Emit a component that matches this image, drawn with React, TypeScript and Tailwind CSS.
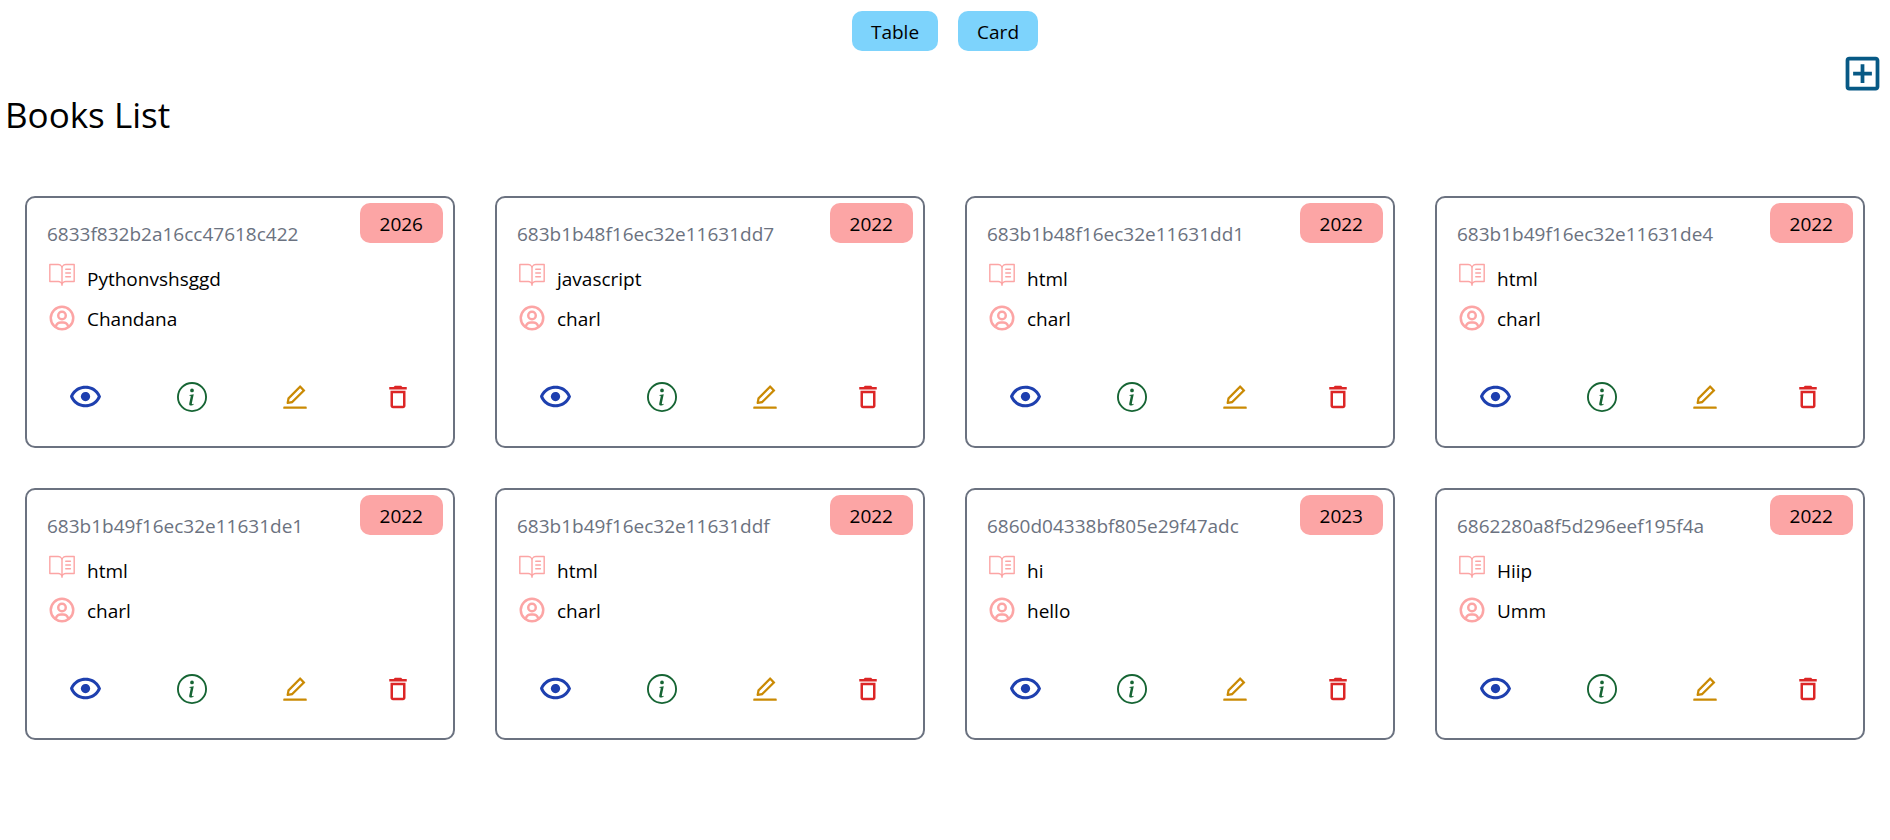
import React from "react";
import { AiOutlineEdit } from "react-icons/ai";
import { BiShow, BiUserCircle } from "react-icons/bi";
import { BsInfoCircle } from "react-icons/bs";
import { MdOutlineAddBox, MdOutlineDelete } from "react-icons/md";
import { PiBookOpenTextLight } from "react-icons/pi";

type Book = {
  id: string;
  title: string;
  author: string;
  year: number;
};

const books: Book[] = [
  { id: "6833f832b2a16cc47618c422", title: "Pythonvshsggd", author: "Chandana", year: 2026 },
  { id: "683b1b48f16ec32e11631dd7", title: "javascript", author: "charl", year: 2022 },
  { id: "683b1b48f16ec32e11631dd1", title: "html", author: "charl", year: 2022 },
  { id: "683b1b49f16ec32e11631de4", title: "html", author: "charl", year: 2022 },
  { id: "683b1b49f16ec32e11631de1", title: "html", author: "charl", year: 2022 },
  { id: "683b1b49f16ec32e11631ddf", title: "html", author: "charl", year: 2022 },
  { id: "6860d04338bf805e29f47adc", title: "hi", author: "hello", year: 2023 },
  { id: "6862280a8f5d296eef195f4a", title: "Hiip", author: "Umm", year: 2022 },
];

function ViewButton({ label }: { label: string }) {
  return (
    <button type="button" className="rounded-[10px] bg-[#7dd3fc] px-[19px] pt-1.5 pb-1">
      {label}
    </button>
  );
}

function BookCard({ book }: { book: Book }) {
  return (
    <article className="relative rounded-[10px] border-2 border-[#6b7280] px-5 pt-5 pb-[31px]">
      <span className="absolute top-[5px] right-2.5 rounded-[10px] bg-[#fca5a5] px-5 pt-1.5 pb-1">
        {book.year}
      </span>
      <p className="pt-px pb-[9px] text-[#6b7280]">{book.id}</p>
      <div className="flex items-start gap-2.5">
        <PiBookOpenTextLight className="size-[30px] text-[#fca5a5]" />
        <h2 className="pt-1.5 pb-1">{book.title}</h2>
      </div>
      <div className="flex items-center gap-2.5">
        <BiUserCircle className="size-[30px] text-[#fca5a5]" />
        <h2 className="pt-1.5 pb-1">{book.author}</h2>
      </div>
      <div className="mt-10 flex items-center justify-between px-5">
        <button type="button" aria-label="Preview book">
          <BiShow className="size-[37px] text-[#1e40af]" />
        </button>
        <a href="#details" aria-label="Book details">
          <BsInfoCircle className="size-[30px] text-[#166534]" />
        </a>
        <a href="#edit" aria-label="Edit book">
          <AiOutlineEdit className="size-[30px] text-[#ca8a04]" />
        </a>
        <a href="#delete" aria-label="Delete book">
          <MdOutlineDelete className="size-[30px] text-[#dc2626]" />
        </a>
      </div>
    </article>
  );
}

export default function App() {
  return (
    <main className="min-h-screen bg-white px-[5px] pt-[11px] font-['Segoe_UI','Open_Sans',sans-serif] text-[19px] leading-[30px] text-black">
      <nav className="flex justify-center gap-5" aria-label="View">
        <ViewButton label="Table" />
        <ViewButton label="Card" />
      </nav>
      <header>
        <div className="flex justify-end">
          <a href="#create" aria-label="Add book">
            <MdOutlineAddBox className="size-[45px] text-[#075985]" />
          </a>
        </div>
        <h1 className="-mt-1 text-[35px] leading-[46px]">Books List</h1>
      </header>
      <section className="mt-[58px] grid gap-10 px-5 sm:grid-cols-2 lg:grid-cols-4">
        {books.map((book) => (
          <BookCard key={book.id} book={book} />
        ))}
      </section>
    </main>
  );
}
